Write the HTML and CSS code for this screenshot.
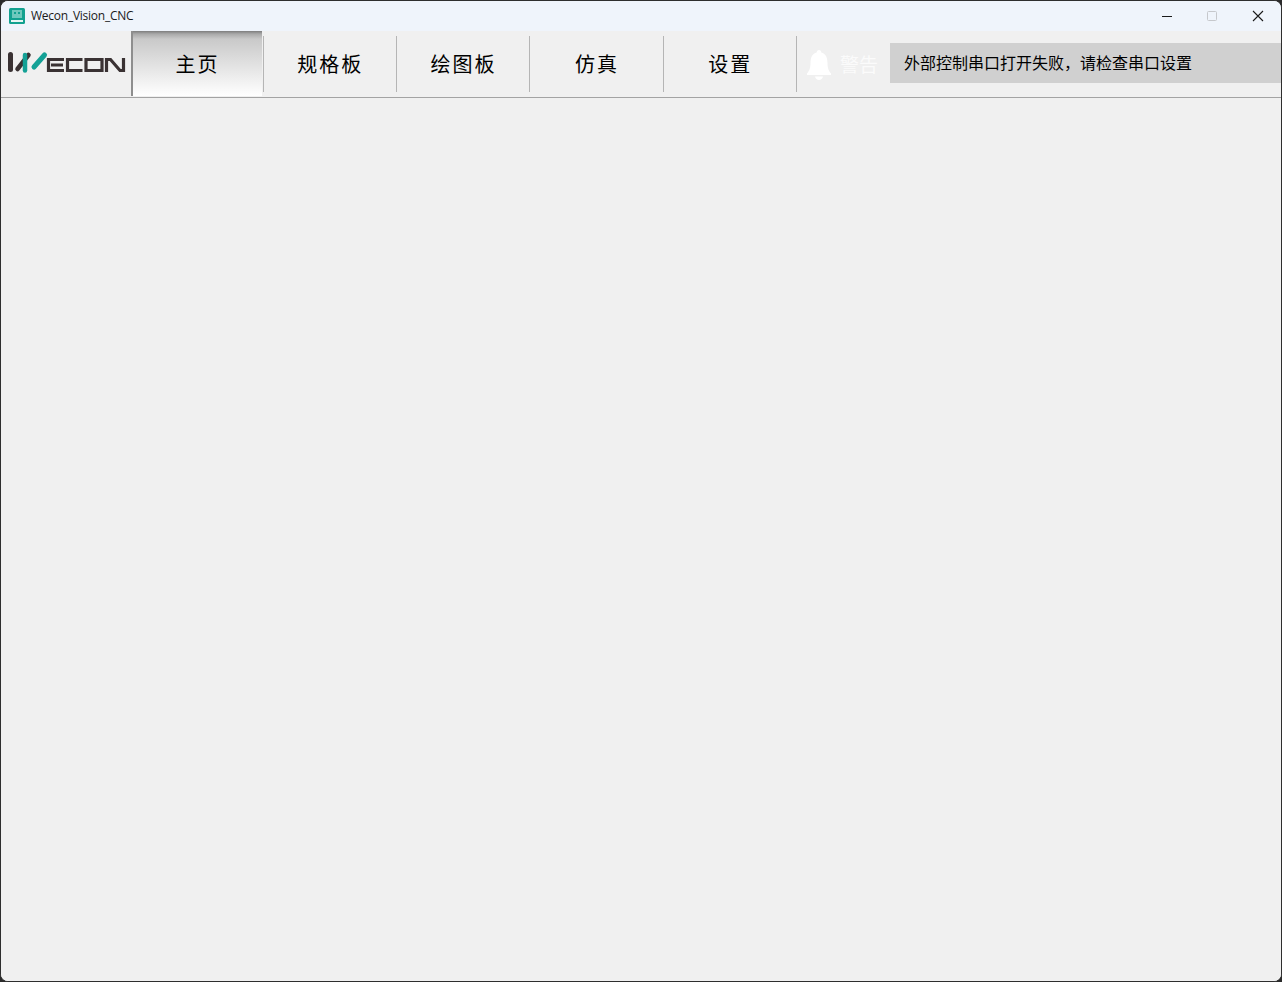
FILE: index.html
```html
<!DOCTYPE html>
<html lang="zh">
<head>
<meta charset="utf-8">
<title>Wecon_Vision_CNC</title>
<link rel="stylesheet" href="styles.css">
</head>
<body>
<div class="window">
  <header class="titlebar">
    <svg class="app-icon" width="16" height="16" viewBox="0 0 16 16">
      <rect width="16" height="16" rx="1.5" fill="#12a190"/>
      <rect x="3" y="2" width="10" height="8" fill="#6fc9bd"/>
      <rect x="5" y="4" width="2" height="2" fill="#12a190"/>
      <rect x="9" y="4" width="2" height="2" fill="#12a190"/>
      <rect x="2" y="12" width="12" height="2" fill="#e6f6f3"/>
    </svg>
    <span class="title">Wecon_Vision_CNC</span>
    <div class="controls">
      <svg class="ctl" width="46" height="31" viewBox="0 0 46 31"><path d="M19 15.5h10" stroke="#1a1a1a" fill="none"/></svg>
      <svg class="ctl" width="46" height="31" viewBox="0 0 46 31"><rect x="18.500" y="10.500" width="9" height="9" rx="1" stroke="#c6c8cc" fill="none"/></svg>
      <svg class="ctl" width="46" height="31" viewBox="0 0 46 31"><path d="M18 10l10 10M28 10L18 20" stroke="#1a1a1a" fill="none" stroke-width="1.1"/></svg>
    </div>
  </header>
  <nav class="toolbar">
    <div class="logo">
      <svg width="120" height="26" viewBox="0 0 120 26">
        <g fill="none" stroke-linecap="round">
          <path d="M3.500 5.500v15" stroke="#3a3233" stroke-width="5"/>
          <path d="M10.500 20L21.500 6" stroke="#3a3233" stroke-width="4.500"/>
          <path d="M18 6v15.500" stroke="#14a196" stroke-width="4.500"/>
          <path d="M27 18L37.500 6" stroke="#14a196" stroke-width="5"/>
        </g>
        <g fill="none" stroke="#3a3233" stroke-width="3.200">
          <path d="M57 10.500H41.500v11H57M44 16H56"/>
          <path d="M75.500 10.500H60.500v11H75.500"/>
          <path d="M79 10.500H95V21.500H79Z"/>
          <path d="M99.500 23V10.500H103.500L113 21.500H116.500V9"/>
        </g>
      </svg>
    </div>
    <button class="tab active">主页</button>
    <button class="tab">规格板</button>
    <button class="tab">绘图板</button>
    <button class="tab">仿真</button>
    <button class="tab">设置</button>
    <div class="alert">
      <svg class="bell" width="24" height="30" viewBox="0 0 24 30">
        <path d="M12 0c1.400 0 2.300 1 2.300 2.500C19 3.800 20.500 8 20.500 13c0 5 1 7.500 3.500 10.500V25H0v-1.500C2.500 20.500 3.500 18 3.500 13c0-5 1.500-9.200 6.200-10.500C9.700 1 10.600 0 12 0z" fill="#fff"/>
        <path d="M8 26.500h8c-.5 2-2 3.500-4 3.500s-3.500-1.500-4-3.500z" fill="#fff"/>
      </svg>
      <span class="alert-label">警告</span>
    </div>
    <div class="message">外部控制串口打开失败，请检查串口设置</div>
  </nav>
  <main class="content"></main>
</div>
</body>
</html>
```
FILE: styles.css
```css
* { box-sizing: border-box; }
html, body { margin: 0; height: 100%; background: #2b2b2b; overflow: hidden; }
.window {
  height: 982px;
  display: flex;
  flex-direction: column;
  border: 1px solid #2e2e2e;
  border-radius: 8px;
  overflow: hidden;
  background: #f0f0f0;
  font-family: "Noto Sans CJK SC", "Noto Sans", sans-serif;
}
.titlebar {
  height: 30px;
  flex: none;
  display: flex;
  align-items: center;
  padding-left: 8px;
  background: #eff4fb;
}
.app-icon { flex: none; }
.title {
  margin: -2px 0 0 6px;
  font: 12px "Open Sans", "Noto Sans", sans-serif;
  color: #1a1a1a;
  letter-spacing: -0.25px;
}
.controls { margin-left: auto; display: flex; }
.ctl { display: block; }
.toolbar {
  height: 67px;
  flex: none;
  display: flex;
  align-items: flex-start;
  background: #f0f0f0;
  border-bottom: 1px solid #a3a3a3;
}
.logo {
  width: 130px;
  height: 66px;
  flex: none;
  display: flex;
  align-items: center;
  padding: 0 0 4px 6px;
}
.tab {
  width: 133.400px;
  height: 56px;
  margin-top: 5px;
  flex: none;
  border: 0;
  border-right: 1px solid #b5b5b5;
  background: transparent;
  font: 20px "Noto Sans CJK SC", sans-serif;
  letter-spacing: 2px;
  color: #000;
  padding: 0 0 2px 1px;
}
.tab.active {
  position: relative;
  width: 131px;
  height: 65px;
  margin: 0 1.500px 0 0;
  padding: 0;
  border-left: 2px solid #8e8e8e;
  border-right: 0;
  background: linear-gradient(#7d7d7d 0, #a9a9a9 3px, #c9c9c9 8px, #fff 100%);
}
.tab.active::after {
  content: "";
  position: absolute;
  top: 5px;
  right: -2px;
  width: 1px;
  height: 56px;
  background: #b5b5b5;
}
.alert {
  width: 93px;
  height: 66px;
  flex: none;
  display: flex;
  align-items: center;
  padding: 0 0 0 10px;
  gap: 9px;
}
.bell { flex: none; margin-top: 1px; }
.alert-label {
  font-size: 19px;
  color: #fbfbfb;
  margin-top: -2px;
}
.message {
  flex: 1;
  height: 40px;
  margin-top: 12px;
  margin-right: -1px;
  padding: 0 0 2px 14px;
  display: flex;
  align-items: center;
  background: #d0d0d0;
  font-size: 16px;
  color: #000;
}
.content { flex: 1; background: #f0f0f0; }
```
